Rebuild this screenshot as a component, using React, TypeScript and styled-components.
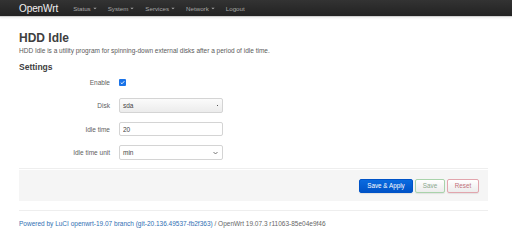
import * as React from "react";
import styled, { createGlobalStyle } from "styled-components";

const GlobalStyle = createGlobalStyle`
  html, body {
    margin: 0;
    padding: 0;
    background: #fff;
  }
  body {
    font-family: "Liberation Sans", Arial, sans-serif;
    color: #404040;
  }
  * {
    box-sizing: border-box;
  }
`;

const menu = ["Status", "System", "Services", "Network"];

const Caret = () => (
  <CaretIcon viewBox="0 0 6 4">
    <path d="M0.5 0.8 L3 3.2 L5.5 0.8 Z" fill="currentColor" />
  </CaretIcon>
);

const App: React.FunctionComponent = () => {
  //***********Render UI*****************
  return (
    <>
      <GlobalStyle />
      <NavBar>
        <Brand>OpenWrt</Brand>
        <Menu>
          {menu.map((item) => (
            <MenuItem key={item}>
              {item}
              <Caret />
            </MenuItem>
          ))}
          <MenuItem>Logout</MenuItem>
        </Menu>
      </NavBar>

      <Main>
        <Title>HDD Idle</Title>
        <Description>
          HDD Idle is a utility program for spinning-down external disks after
          a period of idle time.
        </Description>

        <SectionTitle>Settings</SectionTitle>
        <Fields>
          <Row compact>
            <Label>Enable</Label>
            <CheckBox>
              <svg viewBox="0 0 10 10" width="5" height="5">
                <path
                  d="M1.5 5.2 L4 7.6 L8.6 2.4"
                  fill="none"
                  stroke="#fff"
                  strokeWidth="1.8"
                />
              </svg>
            </CheckBox>
          </Row>
          <Row>
            <Label>Disk</Label>
            <Select shaded>
              <span>sda</span>
              <TinyArrow />
            </Select>
          </Row>
          <Row>
            <Label>Idle time</Label>
            <TextInput defaultValue="20" />
          </Row>
          <Row>
            <Label>Idle time unit</Label>
            <Select>
              <span>min</span>
              <svg viewBox="0 0 10 6" width="5" height="4">
                <path
                  d="M1 1 L5 5 L9 1"
                  fill="none"
                  stroke="#555"
                  strokeWidth="1.6"
                />
              </svg>
            </Select>
          </Row>
        </Fields>

        <Actions>
          <Button variant="apply">Save &amp; Apply</Button>
          <Button variant="save">Save</Button>
          <Button variant="reset">Reset</Button>
        </Actions>

        <Footer>
          <FooterLink>
            Powered by LuCI openwrt-19.07 branch (git-20.136.49537-fb2f363)
          </FooterLink>{" "}
          / OpenWrt 19.07.3 r11063-85e04e9f46
        </Footer>
      </Main>
    </>
  );
};

const NavBar = styled.header`
  display: flex;
  align-items: center;
  height: 17px;
  padding-left: 19px;
  background: linear-gradient(#333333, #222222);
  border-bottom: 1px solid #d0d0d0;
  box-shadow: 0 1px 2px rgb(0 0 0 / 8%);
`;
const Brand = styled.div`
  font-size: 10px;
  color: #f2f2f2;
  margin-right: 15px;
  letter-spacing: -0.1px;
`;
const Menu = styled.nav`
  display: flex;
  align-items: center;
  gap: 11px;
`;
const MenuItem = styled.span`
  display: flex;
  align-items: center;
  font-size: 6.2px;
  color: #a8a8a8;
`;
const CaretIcon = styled.svg`
  width: 4px;
  height: 3px;
  margin-left: 2px;
`;
const Main = styled.main`
  padding: 0 24px 0 19px;
`;
const Title = styled.h2`
  font-size: 12px;
  font-weight: bold;
  color: #404040;
  margin: 13px 0 0;
  line-height: 16px;
`;
const Description = styled.p`
  font-size: 6.5px;
  color: #5a5a5a;
  margin: 1px 0 0;
  line-height: 8px;
`;
const SectionTitle = styled.h3`
  font-size: 8.5px;
  font-weight: bold;
  color: #404040;
  margin: 7px 0 0;
  line-height: 10px;
`;
const Fields = styled.div`
  display: flex;
  flex-direction: column;
  gap: 9px;
  padding: 4px 0 8px;
  border-bottom: 1px solid #eee;
`;
const Row = styled.div<{ compact?: boolean }>`
  display: grid;
  grid-template-columns: 91px 104px;
  column-gap: 9px;
  align-items: center;
  min-height: ${({ compact }) => (compact ? "13px" : "14px")};
`;
const Label = styled.label`
  text-align: right;
  font-size: 6.5px;
  color: #606060;
`;
const CheckBox = styled.span`
  display: flex;
  align-items: center;
  justify-content: center;
  width: 6.5px;
  height: 6.5px;
  border-radius: 1px;
  background: #1a73e8;
`;
const Select = styled.div<{ shaded?: boolean }>`
  display: flex;
  align-items: center;
  justify-content: space-between;
  height: 15px;
  padding: 0 4px 0 3px;
  border: 1px solid #d4d4d4;
  border-radius: 2px;
  background: ${({ shaded }) =>
    shaded ? "linear-gradient(#fbfbfb, #ececec)" : "#fff"};
  font-size: 6.5px;
  color: #444;
`;
const TinyArrow = styled.span`
  width: 1.5px;
  height: 1.5px;
  background: #555;
`;
const TextInput = styled.input`
  height: 14px;
  padding: 0 3px;
  border: 1px solid #d4d4d4;
  border-radius: 2px;
  font-family: inherit;
  font-size: 6.5px;
  color: #444;
  outline: none;
  background: #fff;
`;
const Actions = styled.div`
  display: flex;
  justify-content: flex-end;
  align-items: center;
  gap: 2px;
  height: 31px;
  margin-top: 1px;
  padding-right: 9px;
  background: #f5f5f5;
`;
const buttonTheme = {
  apply: {
    bg: "linear-gradient(#0a6be0, #0053c7)",
    border: "#0053c7",
    color: "#fff",
    width: "54px",
  },
  save: {
    bg: "linear-gradient(#ffffff, #ececec)",
    border: "#a9d3ab",
    color: "#8aa88c",
    width: "30px",
  },
  reset: {
    bg: "linear-gradient(#ffffff, #ececec)",
    border: "#e2a5ad",
    color: "#c0707a",
    width: "32px",
  },
};
const Button = styled.button<{ variant: keyof typeof buttonTheme }>`
  height: 14px;
  width: ${({ variant }) => buttonTheme[variant].width};
  padding: 0;
  border: 1px solid ${({ variant }) => buttonTheme[variant].border};
  border-radius: 2px;
  background: ${({ variant }) => buttonTheme[variant].bg};
  color: ${({ variant }) => buttonTheme[variant].color};
  font-family: inherit;
  font-size: 6.3px;
  box-shadow: 0 1px 1px rgb(0 0 0 / 8%);
`;
const Footer = styled.footer`
  margin-top: 9px;
  padding-top: 9px;
  border-top: 1px solid #eee;
  font-size: 6.5px;
  color: #666;
  line-height: 8px;
`;
const FooterLink = styled.span`
  color: #2f6fb3;
`;

export default App;
